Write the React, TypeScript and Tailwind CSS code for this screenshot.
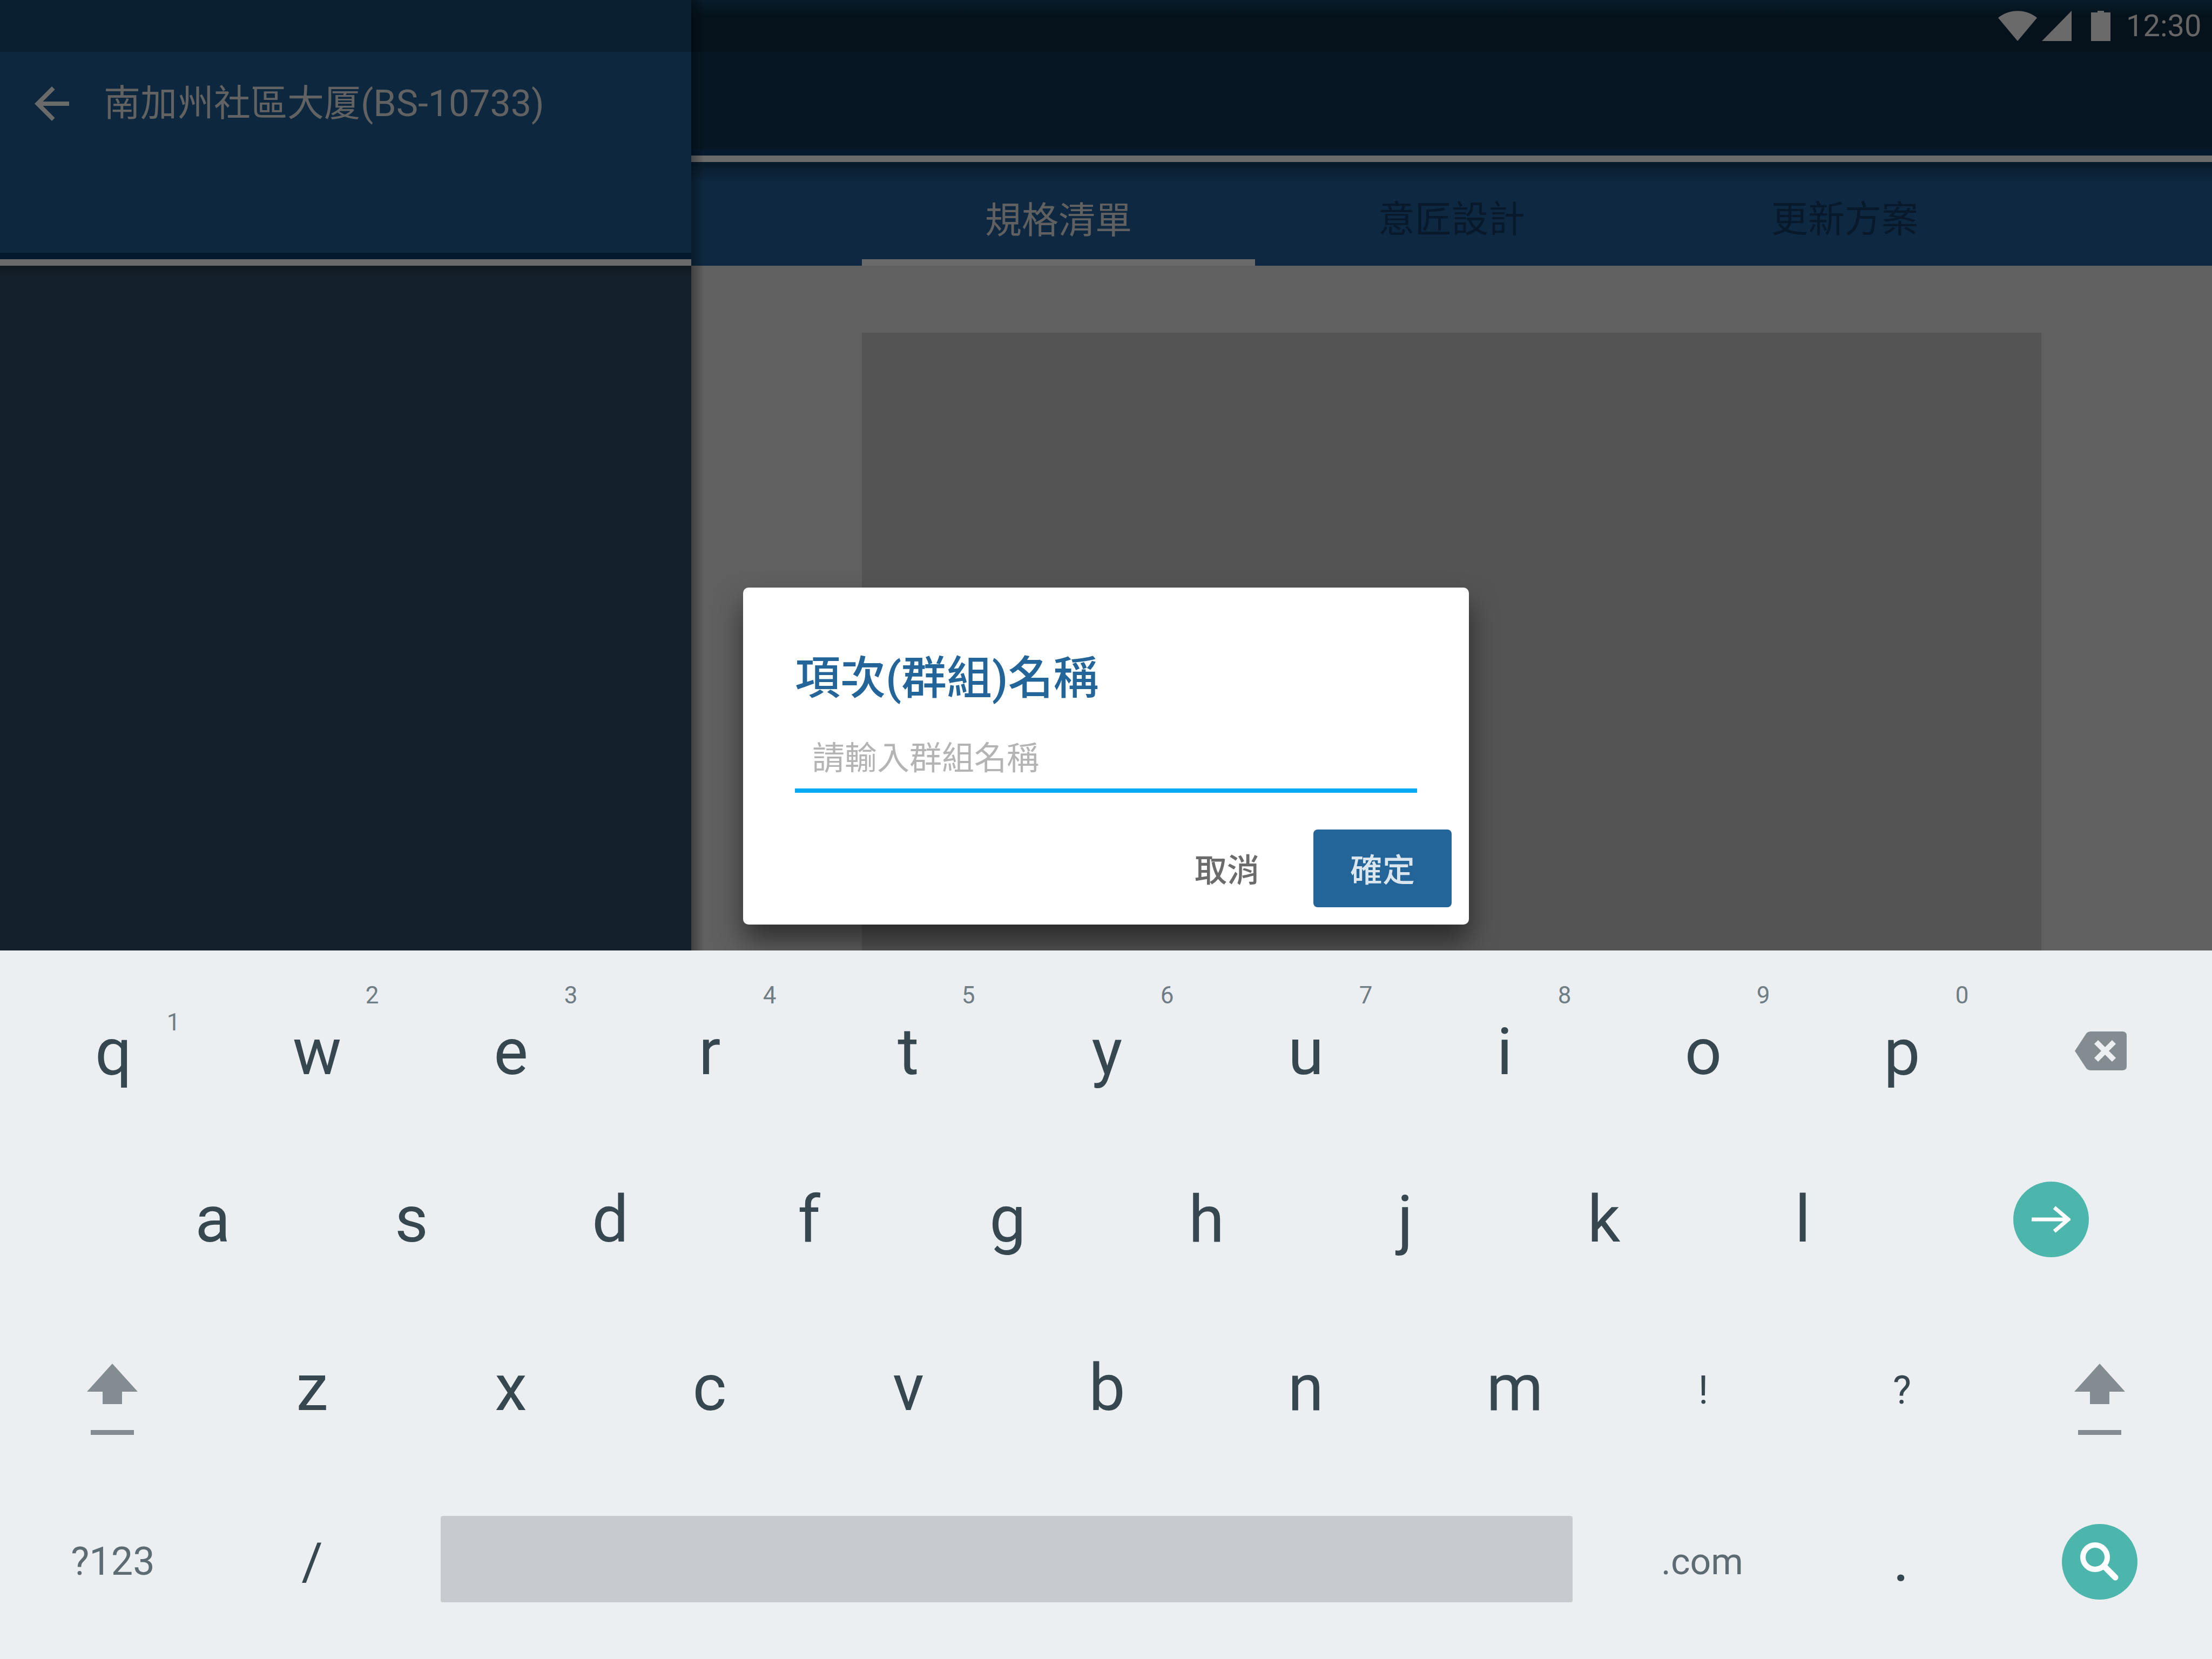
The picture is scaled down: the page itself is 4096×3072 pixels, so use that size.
import React from "react";

const FONT = "font-[family-name:Roboto,'Noto_Sans_CJK_TC',sans-serif]";

function Key({ k, hint, low, size = "text-[120px]", cls = "" }: { k: string; hint?: string; low?: boolean; size?: string; cls?: string }) {
  return (
    <div className={`relative w-[368px] h-full flex items-center justify-center leading-none text-[#37474f] ${size} ${cls}`}>
      <span>{k}</span>
      {hint && (
        <span className={`absolute left-[265px] w-[60px] text-center text-[44px] leading-none text-[#6f7d84] ${low ? "top-[81px]" : "top-[31px]"}`}>{hint}</span>
      )}
    </div>
  );
}

function Shift() {
  return (
    <svg width="96" height="132" viewBox="0 0 96 132" fill="#828c91" className="mt-[42px]">
      <path d="M48 0 L95 52 H66 V75 H30 V52 H1 Z" />
      <rect x="8" y="123" width="80" height="9" />
    </svg>
  );
}

export default function App() {
  const row1: [string, string][] = [["q", "1"], ["w", "2"], ["e", "3"], ["r", "4"], ["t", "5"], ["y", "6"], ["u", "7"], ["i", "8"], ["o", "9"], ["p", "0"]];
  return (
    <div className={`relative w-[4096px] h-[3072px] overflow-hidden flex flex-col ${FONT}`}>
      <div className="h-[1760px] flex">
        <aside className="w-[1280px] flex flex-col bg-[#14202c]">
          <div className="h-[96px] bg-[#0a1f2f]" />
          <div className="h-[372px] bg-[#0d283e] pl-[48px] pt-[48px]">
            <div className="h-[96px] flex items-center gap-[48px] text-[#626262]">
              <svg width="96" height="96" viewBox="0 0 24 24" fill="#6a6a6a">
                <path d="M20 11H7.83l5.59-5.59L12 4l-8 8 8 8 1.41-1.41L7.83 13H20v-2z" />
              </svg>
              <span className="text-[68px] leading-none">南加州社區大厦(BS-10733)</span>
            </div>
          </div>
          <div className="h-[12px] bg-[#05192e]" />
          <div className="h-[12px] bg-[#6a6a6a]" />
          <div className="h-[24px] bg-gradient-to-b from-[#10191f] to-[#14202c]" />
        </aside>
        <main className="relative flex-1 flex flex-col bg-[#606060]">
          <div className="h-[96px] bg-gradient-to-b from-[#071c2c] to-[#05121b] to-[30%] flex items-center justify-end pr-[20px] gap-[29px]">
            <div className="flex items-end gap-[9px] h-[56px]">
              <svg width="72" height="56" viewBox="0 0 72 56" fill="#6a6a6a">
                <path d="M36 56 L0 13 C20 -4 52 -4 72 13 Z" />
              </svg>
              <svg width="55" height="56" viewBox="0 0 55 56" fill="#6a6a6a">
                <path d="M55 0 V56 H0 Z" />
              </svg>
              <svg width="36" height="56" viewBox="0 0 36 56" fill="#6a6a6a" className="ml-[27px]">
                <path d="M12 0 H24 V3 H36 V56 H0 V3 H12 Z" />
              </svg>
            </div>
            <span className="w-[139px] text-[56px] leading-none text-[#666666]">12:30</span>
          </div>
          <div className="h-[180px] bg-[#061723]" />
          <div className="h-[12px] bg-[#05192e]" />
          <div className="h-[12px] bg-[#6a6a6a]" />
          <div className="h-[192px] bg-gradient-to-b from-[#081a2a] to-[#0d2840] to-[20%] px-[316px] flex">
            <div className="w-[728px] flex items-center justify-center border-b-[12px] border-[#6a6a6a] pt-[38px] text-[68px] text-[#606060]">規格清單</div>
            <div className="w-[728px] flex items-center justify-center pt-[22px] text-[68px] text-[#07192a]">意匠設計</div>
            <div className="w-[728px] flex items-center justify-center pt-[22px] text-[68px] text-[#07192a]">更新方案</div>
          </div>
          <div className="flex-1 px-[316px] pt-[124px] flex">
            <div className="flex-1 bg-[#545454]" />
          </div>
          <div className="absolute left-0 top-0 bottom-0 w-[24px] bg-gradient-to-r from-[#00000050] to-transparent" />
        </main>
      </div>

      <div className="absolute left-[1376px] top-[1088px] w-[1344px] h-[624px] bg-white rounded-[10px] shadow-[0_30px_50px_rgba(0,0,0,0.5)] px-[96px] pt-[109px] flex flex-col">
        <div className="text-[84px] leading-[120px] font-medium text-[#236499]">項次(群組)名稱</div>
        <div className="mt-[33px] h-[118px] border-b-[8px] border-[#03a9f4] pl-[32px] pt-[15px] text-[60px] leading-[80px] text-[#b4b4b4]">請輸入群組名稱</div>
        <div className="mt-[68px] -mr-[64px] flex justify-end items-center">
          <span className="pt-[10px] text-[60px] leading-none font-medium text-[#6b6b6b] mr-[100px]">取消</span>
          <div className="w-[256px] h-[144px] pt-[10px] rounded-[8px] bg-[#236499] flex items-center justify-center text-[60px] font-medium text-[#dbe5ee]">確定</div>
        </div>
      </div>

      <div className="relative flex-1 bg-[#ebeff2] pt-[30px] flex flex-col">
        <div className="h-[312px] flex pl-[26px]">
          {row1.map(([k, h], i) => (
            <Key key={k} k={k} hint={h} low={i === 0} cls={k === "w" ? "pl-[18px] pt-[3px]" : "pt-[3px]"} />
          ))}
          <div className="w-[368px] h-full flex items-center justify-center">
            <svg width="96" height="72" viewBox="0 0 96 72">
              <path d="M0 36 L21 4 Q24 0 30 0 H88 Q96 0 96 8 V64 Q96 72 88 72 H30 Q24 72 21 68 Z" fill="#828c91" />
              <path d="M39.5 19.5 L72.5 52.5 M72.5 19.5 L39.5 52.5" stroke="#ebeff2" strokeWidth="10" />
            </svg>
          </div>
        </div>
        <div className="h-[312px] flex pl-[210px]">
          {["a", "s", "d", "f", "g", "h", "j", "k", "l"].map((k) => (
            <Key key={k} k={k} />
          ))}
          <div className="flex-1 h-full flex items-center justify-center pr-[22px]">
            <div className="w-[140px] h-[140px] rounded-full bg-[#4db6ac] flex items-center justify-center">
              <svg width="72" height="56" viewBox="0 0 72 56" fill="none" stroke="#ffffff" strokeWidth="7">
                <path d="M0 28 H68 M42 6 L68 28 L42 50" />
              </svg>
            </div>
          </div>
        </div>
        <div className="h-[322px] flex pl-[26px] pb-[10px]">
          <div className="w-[368px] h-full flex items-center justify-center pr-[4px]">
            <Shift />
          </div>
          {["z", "x", "c", "v", "b", "n"].map((k) => (
            <Key key={k} k={k} />
          ))}
          <Key k="m" cls="pl-[38px]" />
          <Key k="!" size="text-[72px]" cls="pt-[10px]" />
          <Key k="?" size="text-[72px]" cls="pt-[10px]" />
          <div className="w-[368px] h-full flex items-center justify-center pr-[4px]">
            <Shift />
          </div>
        </div>
        <div className="h-[312px] flex pl-[26px]">
          <div className="w-[368px] h-full flex items-center justify-center text-[72px] leading-none text-[#5d6b72] pr-[2px]">?123</div>
          <Key k="/" size="text-[96px]" />
          <div className="ml-[54px] w-[2096px] h-[160px] mt-[71px] rounded-[4px] bg-[#c7cbcf]" />
          <div className="ml-[56px] w-[368px] h-full flex items-center justify-center text-[68px] leading-none text-[#5d6b72]">.com</div>
          <Key k="." size="text-[96px]" cls="pt-[4px] font-medium" />
          <div className="w-[368px] h-full flex items-center justify-center">
            <div className="w-[140px] h-[140px] rounded-full bg-[#4db6ac]">
              <svg width="140" height="140" viewBox="0 0 140 140" fill="none" stroke="#ffffff">
                <circle cx="61.5" cy="61.5" r="22.5" strokeWidth="10" />
                <path d="M79 79 L99 99" strokeWidth="11" strokeLinecap="round" />
              </svg>
            </div>
          </div>
        </div>
      </div>
    </div>
  );
}
